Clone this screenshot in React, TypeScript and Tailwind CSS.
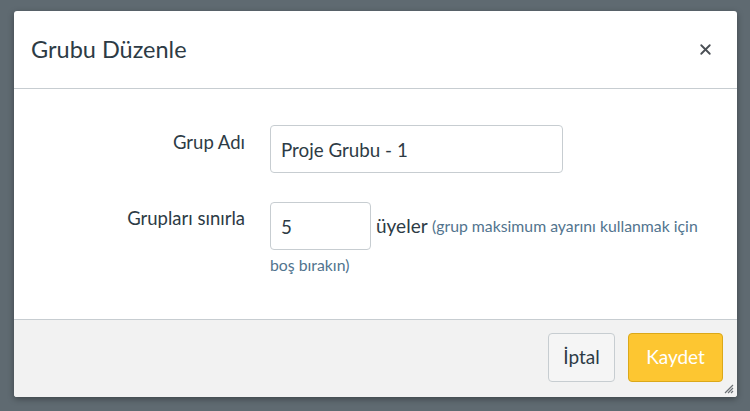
import { X } from 'lucide-react'

export default function App() {
  return (
    <div
      className="relative h-[411px] w-[750px] overflow-hidden bg-[#5f6a71] pl-[14px] pt-[11px]"
      style={{ fontFamily: 'Lato, "Noto Sans", sans-serif' }}
    >
      <div className="relative flex h-[386px] w-[723px] flex-col overflow-hidden rounded-[3px] bg-white shadow-[0_2px_6px_rgba(0,0,0,0.35)]">
        {/* header */}
        <div className="flex h-[78px] shrink-0 items-center justify-between border-b border-[#c7cdd1] pl-[17px] pr-[23px]">
          <h2 className="text-[23.5px] font-normal text-[#2d3b45]">Grubu Düzenle</h2>
          <X className="h-[17px] w-[17px] text-[#4a4f55]" strokeWidth={2.6} />
        </div>

        {/* body */}
        <div className="flex-1 pt-[36px]">
          <div className="grid grid-cols-[231px_1fr] gap-x-[25px]">
            <label className="pt-[4px] text-right text-[18.5px] text-[#2d3b45]">Grup Adı</label>
            <div>
              <input
                defaultValue="Proje Grubu - 1"
                className="h-[48px] w-[293px] rounded-[4px] border border-[#c7cdd1] px-[10px] text-[18.8px] text-[#2d3b45] outline-none"
              />
            </div>

            <label className="mt-[29px] pt-[3px] text-right text-[18.5px] text-[#2d3b45]">Grupları sınırla</label>
            <div className="mt-[29px] pr-[30px] text-[17px] leading-[26px] text-[#2d3b45]">
              <input
                defaultValue="5"
                className="mr-[5px] inline-block h-[48px] w-[101px] rounded-[4px] border border-[#c7cdd1] px-[10px] align-middle text-[18.8px] text-[#2d3b45] outline-none"
              />
              <span className="align-middle text-[19px]">üyeler</span>{' '}
              <span className="align-middle text-[15.8px] text-[#52748e]">
                (grup maksimum ayarını kullanmak için boş bırakın)
              </span>
            </div>
          </div>
        </div>

        {/* footer */}
        <div className="flex h-[78px] shrink-0 items-start justify-end gap-[13px] border-t border-[#c7cdd1] bg-[#f2f2f2] pr-[14px] pt-[13px]">
          <button className="h-[49px] w-[67px] rounded-[4px] border border-[#c7cdd1] bg-[#f5f5f5] text-[19px] text-[#2d3b45]">
            İptal
          </button>
          <button className="h-[49px] w-[95px] rounded-[4px] border border-[#dba819] bg-[#fdc631] text-[19px] text-white">
            Kaydet
          </button>
        </div>

        <svg className="absolute bottom-[3px] right-[3px]" width="12" height="12" viewBox="0 0 12 12">
          <path d="M11 3 L3 11 M11 6 L6 11 M11 9 L9 11" stroke="#6b7075" strokeWidth="1.2" />
        </svg>
      </div>
    </div>
  )
}
